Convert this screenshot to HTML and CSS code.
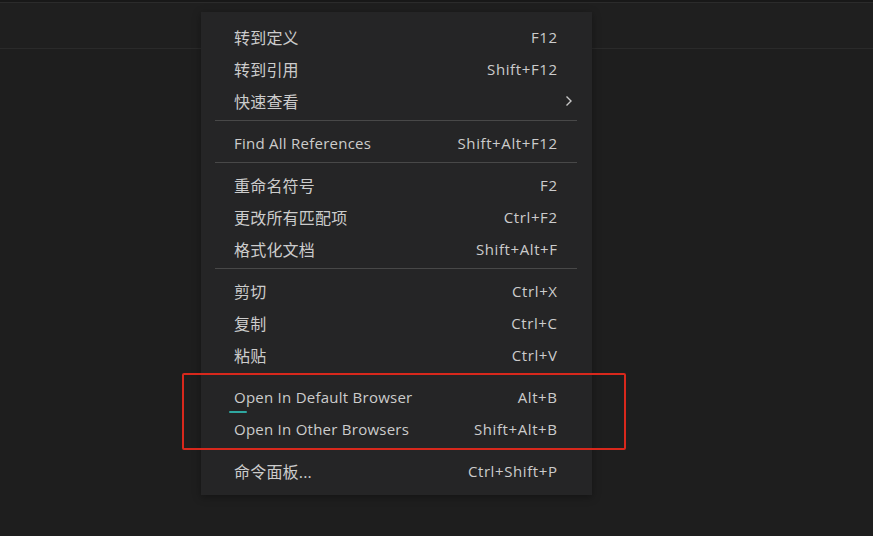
FILE: index.html
```html
<!DOCTYPE html>
<html lang="zh">
<head>
<meta charset="utf-8">
<link rel="stylesheet" href="styles.css">
</head>
<body>
<div class="topbar"></div>
<div class="editor"></div>
<div class="menu">
  <div class="item"><span class="label zh">转到定义</span><span class="key">F12</span></div>
  <div class="item"><span class="label zh">转到引用</span><span class="key">Shift+F12</span></div>
  <div class="item"><span class="label zh">快速查看</span><span class="chev"><svg width="8" height="12" viewBox="0 0 8 12"><path d="M1.5 1.5 L6 6 L1.5 10.5" fill="none" stroke="#c8c8c8" stroke-width="1.4"/></svg></span></div>
  <div class="sep"></div>
  <div class="item"><span class="label">Find All References</span><span class="key">Shift+Alt+F12</span></div>
  <div class="sep"></div>
  <div class="item"><span class="label zh">重命名符号</span><span class="key">F2</span></div>
  <div class="item"><span class="label zh">更改所有匹配项</span><span class="key">Ctrl+F2</span></div>
  <div class="item"><span class="label zh">格式化文档</span><span class="key">Shift+Alt+F</span></div>
  <div class="sep"></div>
  <div class="item"><span class="label zh">剪切</span><span class="key">Ctrl+X</span></div>
  <div class="item"><span class="label zh">复制</span><span class="key">Ctrl+C</span></div>
  <div class="item"><span class="label zh">粘贴</span><span class="key">Ctrl+V</span></div>
  <div class="sep"></div>
  <div class="item"><span class="label squiggle">Open In Default Browser</span><span class="key">Alt+B</span></div>
  <div class="item"><span class="label">Open In Other Browsers</span><span class="key">Shift+Alt+B</span></div>
  <div class="sep"></div>
  <div class="item"><span class="label zh">命令面板...</span><span class="key">Ctrl+Shift+P</span></div>
</div>
<div class="highlight"></div>
</body>
</html>
```
FILE: styles.css
```css
html, body {
  margin: 0;
  padding: 0;
  width: 873px;
  height: 536px;
  overflow: hidden;
  background: #1e1e1e;
  font-family: "Open Sans", "Noto Sans CJK SC", sans-serif;
}
.topbar {
  height: 2px;
  background: #181818;
  border-bottom: 1px solid #2b2b2b;
}
.editor {
  height: 45px;
  border-bottom: 1px solid #2a2a2a;
  background: #1f1f1f;
}
.menu {
  position: absolute;
  left: 201px;
  top: 12px;
  width: 391px;
  padding: 9px 0 8px;
  background: #252526;
  box-shadow: 0 2px 8px rgba(0,0,0,0.35);
  color: #cccccc;
  font-size: 15px;
}
.item {
  height: 32px;
  display: flex;
  align-items: center;
  justify-content: space-between;
  padding: 0 35px 0 33px;
}
.label {
  position: relative;
  white-space: nowrap;
  letter-spacing: 0.25px;
}
.label.zh {
  font-size: 16px;
  letter-spacing: 0.2px;
}
.key {
  white-space: nowrap;
  letter-spacing: 0.6px;
  margin-right: -0.6px;
}
.chev {
  display: flex;
  margin-right: -16px;
}
.sep {
  height: 1px;
  background: #484848;
  margin: 3px 15px 6px 14px;
}
.squiggle::after {
  content: "";
  position: absolute;
  left: -5px;
  bottom: -6px;
  width: 18px;
  height: 2px;
  border-radius: 1px;
  background: #2fa7a0;
}
.highlight {
  position: absolute;
  left: 182px;
  top: 373px;
  width: 440px;
  height: 73px;
  border: 2px solid #d8281c;
  border-radius: 2px;
}
```
